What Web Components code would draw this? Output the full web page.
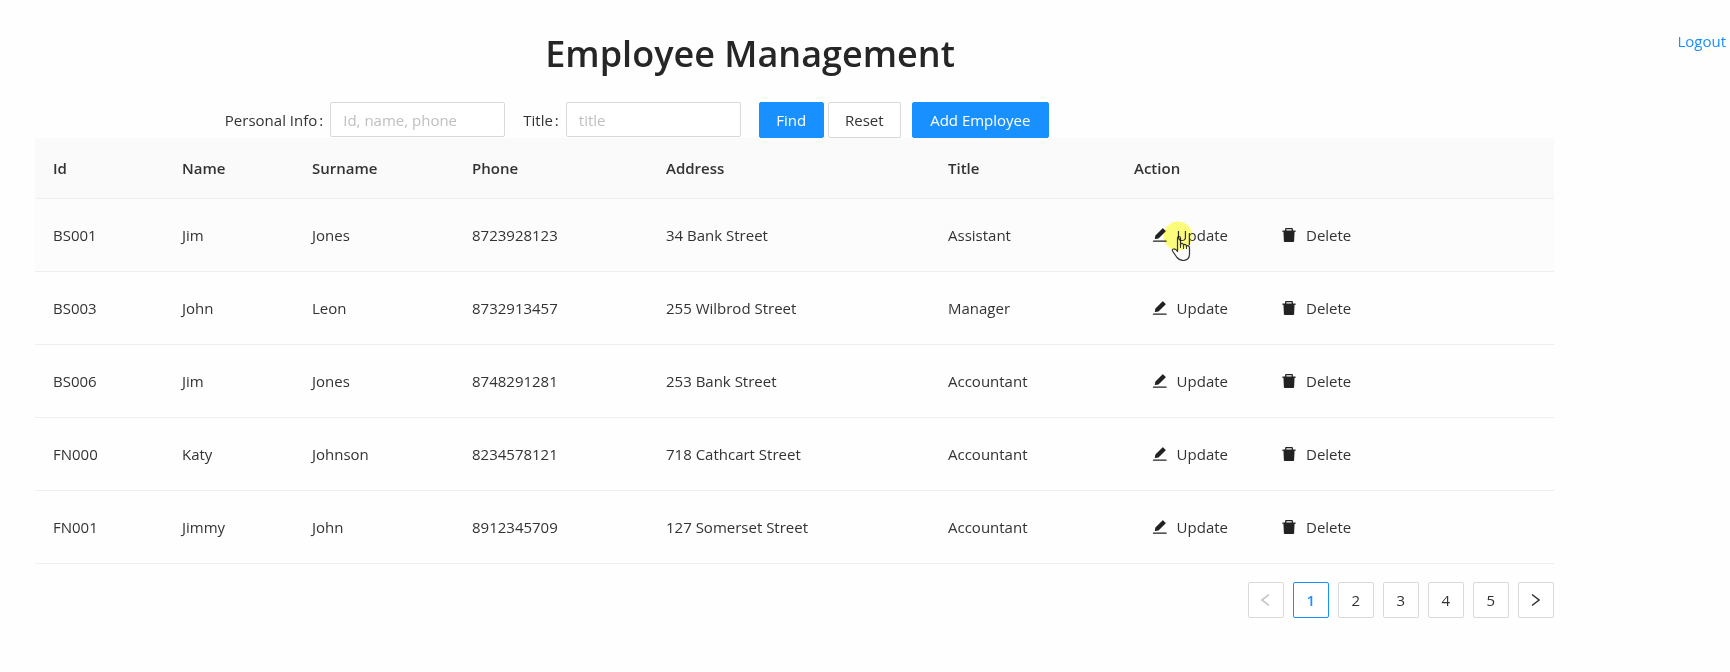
<!DOCTYPE html>
<html lang="en">
<head>
<meta charset="utf-8">
<title>Employee Management</title>
<style>
  body { margin: 0; background: #fefefe; color: #333; font: 15px/24px "Open Sans", "Noto Sans", sans-serif; }
</style>
</head>
<body>
<employee-app></employee-app>

<template id="app-icon">
  <style>
    :host { display: inline-flex; width: 18px; height: 18px; color: #222; }
    svg { width: 100%; height: 100%; fill: currentColor; }
  </style>
  <svg viewBox="0 0 1024 1024" aria-hidden="true"><path></path></svg>
</template>

<template id="app-button">
  <style>
    :host { display: inline-flex; }
    button { box-sizing: border-box; width: 100%; height: 36px; padding: 0 16px; border: 1px solid #d9d9d9; border-radius: 2px;
      background: #fff; color: inherit; font: inherit; white-space: nowrap; cursor: pointer; display: flex; align-items: center; justify-content: center; gap: 8px; }
    :host([kind="primary"]) button { background: #1890ff; border-color: #1890ff; color: #fff; }
    :host([kind="text"]) button { background: none; border: 0; padding: 0 17px; justify-content: flex-start; }
    :host([kind="page"]) button { width: 36px; padding: 0; }
    :host([current]) button { border-color: #1890ff; color: #1890ff; font-weight: 600; }
    button:disabled { color: #bfbfbf; cursor: not-allowed; }
  </style>
  <button type="button"><slot></slot></button>
</template>

<template id="search-field">
  <style>
    :host { display: flex; align-items: center; }
    label { white-space: nowrap; }
    label::after { content: ":"; margin: 0 7px 0 2px; }
    input { box-sizing: border-box; width: 175px; height: 35px; padding: 0 12px; border: 1px solid #d9d9d9; border-radius: 2px;
      background: #fff; color: inherit; font: inherit; outline: none; }
    input::placeholder { color: #bfbfbf; opacity: 1; }
  </style>
  <label for="box"></label><input id="box" type="text">
</template>

<template id="hand-pointer">
  <style>
    :host { display: block; width: 32px; height: 40px; pointer-events: none; mix-blend-mode: multiply; }
    svg { display: block; }
  </style>
  <svg width="32" height="40" viewBox="0 0 32 40" aria-hidden="true">
    <circle cx="15" cy="15" r="14.5" fill="#ffff7d"/>
    <path d="M14.5 29.500V17q0-1.500 1.500-1.500t1.500 1.500V25v-2q1.500-1.500 3 .5V26v-2q1.500-1.500 3 .5V26v-1q2.500-1 3 1.500V33q0 6-6 6.500-4 0-6.500-3l-4.500-6.500q-.5-2 1-2 2-.5 4 2.500z" fill="none" stroke="#333" stroke-width="1.200" stroke-linejoin="round"/>
    <path d="M17.500 25v2M20.500 26v2M23.500 26v2" stroke="#333" stroke-width="1"/>
  </svg>
</template>

<template id="employee-search">
  <style>
    form { display: flex; align-items: flex-start; gap: 18px; margin: 0; }
    .buttons { display: flex; }
    .find { width: 65px; margin-right: 4px; }
    .reset { width: 73px; margin-right: 11px; }
    .add { width: 137px; }
  </style>
  <form>
    <search-field label="Personal Info" hint="Id, name, phone"></search-field>
    <search-field label="Title" hint="title"></search-field>
    <div class="buttons">
      <app-button class="find" kind="primary">Find</app-button>
      <app-button class="reset">Reset</app-button>
      <app-button class="add" kind="primary">Add Employee</app-button>
    </div>
  </form>
</template>

<template id="employee-table">
  <style>
    :host { display: block; }
    table { width: 100%; table-layout: fixed; border-collapse: separate; border-spacing: 0; }
    .id { width: 129px; } .name { width: 130px; } .surname { width: 160px; } .phone { width: 194px; }
    .address { width: 282px; } .title { width: 186px; }
    th, td { padding: 18px; text-align: left; border-bottom: 1px solid #eee; white-space: nowrap; }
    th { font-weight: 600; background: #fafafa; color: #333; }
    tr.active td { background: #fcfcfc; }
    .actions { display: flex; gap: 18px; position: relative; }
    .actions app-button:first-child { width: 111px; }
    hand-pointer { position: absolute; left: 29px; top: 4px; }
  </style>
  <table>
    <colgroup><col class="id"><col class="name"><col class="surname"><col class="phone"><col class="address"><col class="title"><col></colgroup>
    <thead><tr><th>Id</th><th>Name</th><th>Surname</th><th>Phone</th><th>Address</th><th>Title</th><th>Action</th></tr></thead>
    <tbody></tbody>
  </table>
</template>

<template id="page-list">
  <style>
    nav { display: flex; justify-content: flex-end; gap: 9px; }
    svg { width: 9px; height: 14px; fill: none; stroke: currentColor; stroke-width: 1.500; }
  </style>
  <nav aria-label="Pages">
    <app-button kind="page" disabled><svg viewBox="0 0 9 14"><path d="M8 1.500L1 7l7 5.500"/></svg></app-button>
    <app-button kind="page" current>1</app-button>
    <app-button kind="page">2</app-button>
    <app-button kind="page">3</app-button>
    <app-button kind="page">4</app-button>
    <app-button kind="page">5</app-button>
    <app-button kind="page"><svg viewBox="0 0 9 14"><path d="M1 1.500L8 7l-7 5.500"/></svg></app-button>
  </nav>
</template>

<template id="employee-app">
  <style>
    :host { display: grid; grid-template-columns: 11fr 1fr; }
    main { padding: 26px 32px 48px 35px; min-width: 0; }
    .heading { display: grid; grid-template-columns: 1fr 2fr; }
    h1 { grid-column: 2; margin: 0 0 20px; padding-left: 4px; color: #262626; font-size: 36px; line-height: 56px; font-weight: 600; white-space: nowrap; }
    employee-search { display: block; padding-left: 12.5%; }
    page-list { display: block; margin-top: 18px; }
    aside { padding: 29px 4px 0 0; text-align: right; }
    a { color: #1890ff; text-decoration: none; }
  </style>
  <main>
    <div class="heading"><h1>Employee Management</h1></div>
    <employee-search></employee-search>
    <employee-table></employee-table>
    <page-list></page-list>
  </main>
  <aside><a href="#logout">Logout</a></aside>
</template>

<script>
  class TemplateElement extends HTMLElement {
    constructor() {
      super();
      const template = document.getElementById(this.localName);
      this.attachShadow({ mode: "open" }).append(document.importNode(template.content, true));
    }
  }

  const ICONS = {
    edit: "M880 836H144c-17.7 0-32 14.3-32 32v36c0 4.4 3.6 8 8 8h784c4.4 0 8-3.6 8-8v-36c0-17.7-14.3-32-32-32zm-622.3-84c2 0 4-.2 6-.5L431.9 722c2-.4 3.9-1.3 5.3-2.8l423.9-423.9a9.96 9.96 0 0 0 0-14.1L694.9 114.9c-1.9-1.9-4.4-2.9-7.1-2.9s-5.2 1-7.1 2.9L256.8 538.8c-1.5 1.5-2.4 3.3-2.8 5.3l-29.5 168.2a33.5 33.5 0 0 0 9.4 29.8c6.6 6.4 14.9 9.9 23.8 9.9z",
    trash: "M864 256H736v-80c0-35.3-28.7-64-64-64H352c-35.3 0-64 28.7-64 64v80H160c-17.7 0-32 14.3-32 32v32c0 4.4 3.6 8 8 8h60.4l24.7 523c1.6 34.1 29.8 61 63.9 61h454c34.2 0 62.3-26.8 63.9-61l24.7-523H888c4.4 0 8-3.6 8-8v-32c0-17.7-14.3-32-32-32zm-200 0H360v-72h304v72z"
  };

  customElements.define("app-icon", class extends TemplateElement {
    connectedCallback() {
      this.shadowRoot.querySelector("path").setAttribute("d", ICONS[this.getAttribute("name")]);
    }
  });

  customElements.define("app-button", class extends TemplateElement {
    connectedCallback() {
      this.shadowRoot.querySelector("button").disabled = this.hasAttribute("disabled");
    }
  });

  customElements.define("search-field", class extends TemplateElement {
    connectedCallback() {
      this.shadowRoot.querySelector("label").textContent = this.getAttribute("label");
      this.shadowRoot.querySelector("input").placeholder = this.getAttribute("hint");
    }
  });

  customElements.define("hand-pointer", class extends TemplateElement {});
  customElements.define("employee-search", class extends TemplateElement {});
  customElements.define("page-list", class extends TemplateElement {});

  const EMPLOYEES = [
    ["BS001", "Jim", "Jones", "8723928123", "34 Bank Street", "Assistant"],
    ["BS003", "John", "Leon", "8732913457", "255 Wilbrod Street", "Manager"],
    ["BS006", "Jim", "Jones", "8748291281", "253 Bank Street", "Accountant"],
    ["FN000", "Katy", "Johnson", "8234578121", "718 Cathcart Street", "Accountant"],
    ["FN001", "Jimmy", "John", "8912345709", "127 Somerset Street", "Accountant"]
  ];

  customElements.define("employee-table", class extends TemplateElement {
    connectedCallback() {
      this.shadowRoot.querySelector("tbody").innerHTML = EMPLOYEES.map((cells, index) => `
        <tr${index === 0 ? ' class="active"' : ""}>${cells.map(text => `<td>${text}</td>`).join("")}
          <td><div class="actions">
            <app-button kind="text"><app-icon name="edit"></app-icon>Update</app-button>
            <app-button kind="text"><app-icon name="trash"></app-icon>Delete</app-button>
            ${index === 0 ? "<hand-pointer></hand-pointer>" : ""}
          </div></td></tr>`).join("");
    }
  });

  customElements.define("employee-app", class extends TemplateElement {});
</script>
</body>
</html>
